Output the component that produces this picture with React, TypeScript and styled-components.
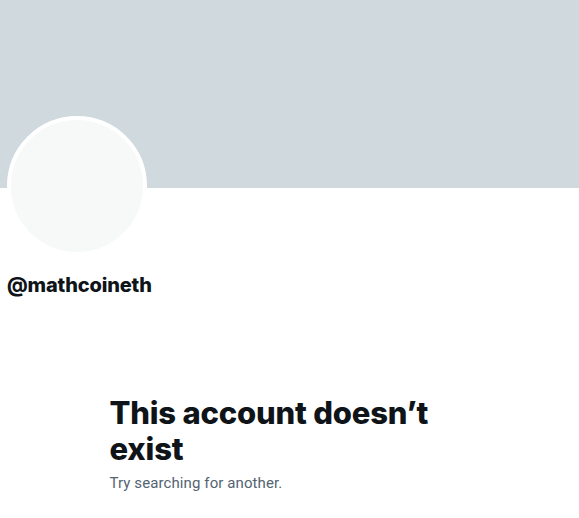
import React from "react";
import styled, { createGlobalStyle } from "styled-components";

const GlobalStyle = createGlobalStyle`
  html, body { margin: 0; padding: 0; background: #ffffff; }
  body { font-family: "Inter", "Noto Sans", sans-serif; color: #0f1419; }
`;

const Page = styled.div`
  width: 579px;
  display: flex;
  flex-direction: column;
`;

const Banner = styled.div`
  height: 188px;
  background: #cfd9de;
`;

const ProfileHeader = styled.div`
  display: flex;
  flex-direction: column;
  align-items: flex-start;
  padding: 0 7px;
`;

const Avatar = styled.div`
  width: 132px;
  height: 132px;
  margin-top: -72px;
  border-radius: 50%;
  border: 4px solid #ffffff;
  background: #f7f9f9;
`;

const Handle = styled.div`
  margin-top: 17px;
  font-size: 20px;
  line-height: 24px;
  font-weight: 800;
  letter-spacing: -0.15px;
  color: #0f1419;
`;

const EmptyState = styled.div`
  width: 360px;
  margin: 98px auto 0;
  padding: 0 20px;
  display: flex;
  flex-direction: column;
`;

const Title = styled.h2`
  margin: 0;
  font-size: 31px;
  line-height: 36px;
  font-weight: 800;
  letter-spacing: -0.2px;
  color: #0f1419;
`;

const Subtitle = styled.p`
  margin: 6px 0 0;
  font-family: "Roboto", "Inter", sans-serif;
  font-size: 15px;
  line-height: 20px;
  letter-spacing: 0.1px;
  color: #536471;
`;

export default function App() {
  return (
    <Page>
      <GlobalStyle />
      <Banner />
      <ProfileHeader>
        <Avatar />
        <Handle>@mathcoineth</Handle>
      </ProfileHeader>
      <EmptyState>
        <Title>This account doesn’t exist</Title>
        <Subtitle>Try searching for another.</Subtitle>
      </EmptyState>
    </Page>
  );
}
